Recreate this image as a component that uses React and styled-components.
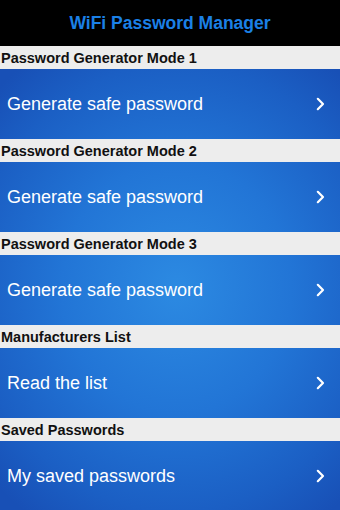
import React from "react";
import styled, { createGlobalStyle } from "styled-components";

const GlobalStyle = createGlobalStyle`
  html, body {
    margin: 0;
    padding: 0;
    background: #000;
  }
  body {
    font-family: "Liberation Sans", Arial, sans-serif;
  }
`;

const sections = [
  { title: "Password Generator Mode 1", label: "Generate safe password" },
  { title: "Password Generator Mode 2", label: "Generate safe password" },
  { title: "Password Generator Mode 3", label: "Generate safe password" },
  { title: "Manufacturers List", label: "Read the list" },
  { title: "Saved Passwords", label: "My saved passwords" },
];

const App = () => {
  return (
    <Screen>
      <GlobalStyle />
      <NavBar>
        <Title>WiFi Password Manager</Title>
      </NavBar>
      <List>
        {sections.map((s) => (
          <React.Fragment key={s.title}>
            <SectionHeader>{s.title}</SectionHeader>
            <Row>
              <RowLabel>{s.label}</RowLabel>
              <Chevron width="9" height="14" viewBox="0 0 9 14">
                <path d="M1.8 1.8 L7 7 L1.8 12.2" fill="none" stroke="#fff" strokeWidth="2.2" strokeLinecap="round" strokeLinejoin="round" />
              </Chevron>
            </Row>
          </React.Fragment>
        ))}
      </List>
    </Screen>
  );
};

export default App;

const Screen = styled.div`
  width: 340px;
  height: 510px;
  overflow: hidden;
  display: flex;
  flex-direction: column;
`;

const NavBar = styled.header`
  height: 46px;
  flex-shrink: 0;
  background: #000;
  display: flex;
  align-items: center;
  justify-content: center;
`;

const Title = styled.h1`
  margin: 0;
  font-size: 17.5px;
  font-weight: bold;
  color: #1b80e6;
`;

const List = styled.div`
  flex: 1;
  display: flex;
  flex-direction: column;
  background: radial-gradient(ellipse 75% 60% at 52% 52%, #2c8ae2 0%, #2275d6 45%, #1b5fc4 80%, #1850b6 100%);
`;

const SectionHeader = styled.div`
  height: 23px;
  flex-shrink: 0;
  background: #ededed;
  color: #111;
  font-size: 14.5px;
  font-weight: bold;
  line-height: 24px;
  padding-left: 1px;
`;

const Row = styled.div`
  height: 70px;
  flex-shrink: 0;
  display: flex;
  align-items: center;
  justify-content: space-between;
  padding: 0 15px 0 7px;
`;

const RowLabel = styled.span`
  color: #fff;
  font-size: 18px;
`;

const Chevron = styled.svg`
  display: block;
`;
